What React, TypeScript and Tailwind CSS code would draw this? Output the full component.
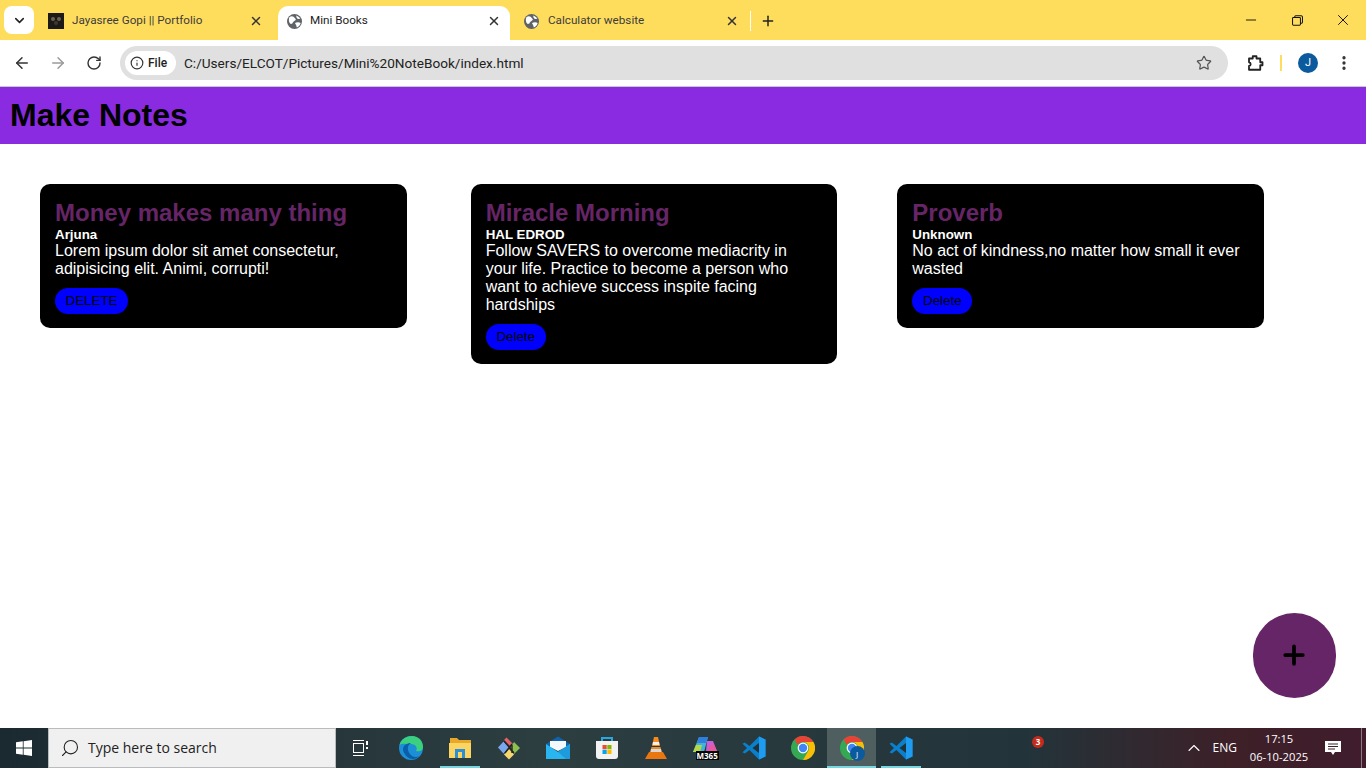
import { ArrowLeft, ArrowRight, ChevronDown, ChevronUp, Info, Minus, MoreVertical, Plus, RotateCw, Search, Star, X } from "lucide-react";

const notes = [
  { title: "Money makes many thing", author: "Arjuna", text: "Lorem ipsum dolor sit amet consectetur, adipisicing elit. Animi, corrupti!", button: "DELETE", cls: "", btn: "w-[73px]" },
  { title: "Miracle Morning", author: "HAL EDROD", text: "Follow SAVERS to overcome mediacrity in your life. Practice to become a person who want to achieve success inspite facing hardships", button: "Delete", cls: "ml-[64px]", btn: "w-[60px]" },
  { title: "Proverb", author: "Unknown", text: "No act of kindness,no matter how small it ever wasted", button: "Delete", cls: "ml-[60px]", btn: "w-[60px]" },
];

function Globe() {
  return (
    <svg viewBox="0 0 16 16" className="w-[15px] h-[15px] shrink-0">
      <circle cx="8" cy="8" r="8" fill="#5f6368" />
      <path d="M2.5 3.5C4 2 6 2 7 3L9.5 5.5C9 7 7.5 7.5 6.5 8.5 6 10 5 11 3.5 10.5 2 9 1.5 6 2.5 3.5Z" fill="#fff" />
      <path d="M10 1.6C12 2.4 13.4 3.6 14.2 5L11.5 5.2 10 3.5Z M8.5 9.5C10.5 8.5 13 8.5 14.6 9.5 14 12 12.5 13.5 10.5 14.4L9.8 12Z" fill="#fff" />
    </svg>
  );
}

function Favicon() {
  return (
    <svg viewBox="0 0 16 16" className="w-4 h-4 shrink-0">
      <rect width="16" height="16" fill="#1c1a18" />
      <circle cx="5" cy="6" r="2" fill="#6d6250" />
      <circle cx="11" cy="6" r="2" fill="#6d6250" />
      <circle cx="8" cy="10" r="2" fill="#3e3830" />
    </svg>
  );
}

function Chrome({ size = 24 }: { size?: number }) {
  return (
    <svg viewBox="0 0 24 24" width={size} height={size}>
      <circle cx="12" cy="12" r="12" fill="#34a853" />
      <path d="M12 0A12 12 0 0 1 22.4 6H12A6 6 0 0 0 6.8 9L3.6 3.4A12 12 0 0 1 12 0Z" fill="#ea4335" />
      <path d="M22.4 6A12 12 0 0 1 12 24L17.2 15A6 6 0 0 0 17.2 9 6 6 0 0 0 12 6Z" fill="#fbbc04" />
      <circle cx="12" cy="12" r="5.4" fill="#fff" />
      <circle cx="12" cy="12" r="4.2" fill="#4285f4" />
    </svg>
  );
}

function VsCode() {
  return (
    <svg viewBox="0 0 24 24" className="w-6 h-6">
      <path d="M17 .5 7.5 10 2.8 6.5 .5 7.8 5 12 .5 16.2 2.8 17.5 7.5 14 17 23.5 23.5 20.5V3.5Z" fill="#0a7fcb" />
      <path d="M17 .5 23.5 3.5V20.5L17 23.5Z" fill="#1f9cf0" />
      <path d="M17 7 10.5 12 17 17Z" fill="#1f3238" />
    </svg>
  );
}

function TaskIcon({ children, open, active }: { children?: React.ReactNode; open?: boolean; active?: boolean }) {
  return (
    <div className={`relative w-[49px] h-10 flex items-center justify-center ${active ? "bg-[#4f5f60]" : ""}`}>
      {children}
      {(open || active) && <span className={`absolute bottom-0 h-0.5 bg-[#76d5de] ${active ? "inset-x-0" : "left-[5px] w-10"}`} />}
    </div>
  );
}

export default function App() {
  return (
    <div className="relative h-screen overflow-hidden flex flex-col bg-white font-['Liberation_Sans',sans-serif]">
      {/* tab strip */}
      <div className="h-10 shrink-0 bg-[#ffdd5c] flex items-end font-['Roboto',sans-serif] text-[11.7px] text-[#3c3c3c]">
        <div className="w-[30px] h-[28px] mb-[6px] ml-1 rounded-lg bg-white flex items-center justify-center">
          <ChevronDown size={15} strokeWidth={2.5} color="#222" />
        </div>
        <div className="w-[244px] h-[34px] pb-1 pl-[14px] pr-[15px] flex items-center">
          <Favicon />
          <span className="ml-2 flex-1">Jayasree Gopi || Portfolio</span>
          <X size={14} strokeWidth={2.5} color="#333" />
        </div>
        <div className="w-[232px] h-[34px] pb-1 pl-[9px] pr-[9px] rounded-t-[10px] bg-white flex items-center">
          <Globe />
          <span className="ml-[8px] flex-1 text-[#222]">Mini Books</span>
          <X size={14} strokeWidth={2.5} color="#333" />
        </div>
        <div className="w-[241px] h-[34px] pb-1 pl-[14px] flex items-center">
          <Globe />
          <span className="ml-[9px] flex-1">Calculator website</span>
          <X size={14} strokeWidth={2.5} color="#333" />
          <div className="w-px h-5 bg-white ml-[11px]" />
        </div>
        <div className="h-[34px] pb-1 ml-[9px] flex items-center">
          <Plus size={16} strokeWidth={2.2} color="#222" />
        </div>
        <div className="flex-1" />
        <div className="h-10 flex items-center text-black">
          <div className="w-[46px] flex justify-center"><Minus size={16} strokeWidth={1.3} /></div>
          <div className="w-[46px] flex justify-center">
            <svg viewBox="0 0 12 12" className="w-[11px] h-[11px]" fill="none" stroke="#111" strokeWidth="1.1">
              <rect x="0.6" y="2.6" width="8.6" height="8.6" rx="1" />
              <path d="M3 2.5V1.8A1 1 0 0 1 4 .8H10A1.4 1.4 0 0 1 11.4 2V8A1 1 0 0 1 10.4 9H9.4" />
            </svg>
          </div>
          <div className="w-[46px] flex justify-center"><X size={18} strokeWidth={1.2} /></div>
        </div>
      </div>

      {/* toolbar */}
      <div className="h-[47px] shrink-0 bg-white rounded-t-lg border-b border-[#c9c9c9] flex items-center pl-[13px] pr-[13px]">
        <ArrowLeft size={18} strokeWidth={2} color="#333" />
        <ArrowRight size={18} strokeWidth={2} color="#9a9a9a" className="ml-[18px]" />
        <RotateCw size={16} strokeWidth={2.1} color="#333" className="ml-[19px]" />
        <div className="ml-[18px] w-[1108px] h-[34px] rounded-full bg-[#e0e0e0] flex items-center pl-[5px] pr-[16px] font-['Roboto',sans-serif]">
          <div className="w-[51px] h-6 rounded-full bg-white flex items-center pl-[5px] gap-[4px] text-xs font-medium text-[#222]">
            <Info size={14} strokeWidth={2} color="#333" />
            File
          </div>
          <span className="ml-2 pt-px text-[13.6px] text-[#222]">C:/Users/ELCOT/Pictures/Mini%20NoteBook/index.html</span>
          <div className="flex-1" />
          <Star size={16} strokeWidth={1.8} color="#555" />
        </div>
        <svg viewBox="0 0 24 24" className="w-[18px] h-[18px] ml-[18px] mr-px" fill="none" stroke="#222" strokeWidth="2.4" strokeLinejoin="round">
          <path d="M4 6H9V3H14V6H19V11H22V15H19V21H4V16C7 15.5 7 11.5 4 11Z" />
        </svg>
        <div className="w-0.5 h-4 bg-[#ffdd5c] ml-[15px]" />
        <div className="w-5 h-5 ml-[16px] rounded-full bg-[#0b5a9e] flex items-center justify-center text-[11px] text-white font-['Roboto',sans-serif]">J</div>
        <MoreVertical size={18} strokeWidth={2.4} color="#333" className="ml-[17px]" />
      </div>

      {/* page */}
      <header className="h-[57px] shrink-0 bg-[#8a2be2] pl-[10px] pb-[2px] flex items-center">
        <h1 className="text-[32px] font-bold text-black">Make Notes</h1>
      </header>
      <main className="flex-1 flex items-start pl-10 pt-10">
        {notes.map((n) => (
          <div key={n.title} className={`${n.cls} w-[366.67px] shrink-0 bg-black rounded-[10px] px-[15px] pt-[15px] pb-[14px]`}>
            <h2 className="text-2xl font-bold leading-[28px] text-[#662566]">{n.title}</h2>
            <h4 className="text-[13.33px] font-bold leading-[15px] text-white">{n.author}</h4>
            <p className="text-base leading-[18px] text-white">{n.text}</p>
            <button className={`${n.btn} h-[26px] mt-[10px] block rounded-[13px] bg-[#0000ff] text-[13.33px] text-black`}>{n.button}</button>
          </div>
        ))}
      </main>
      <button className="absolute right-[30px] bottom-[70px] w-[83px] h-[85px] pr-px pb-px rounded-full bg-[#662566] flex items-center justify-center text-black">
        <Plus size={30} strokeWidth={3} />
      </button>

      {/* taskbar */}
      <div className="relative h-10 shrink-0 flex items-center bg-[linear-gradient(90deg,#1b2a31_0%,#2d3e41_40%,#22343a_75%,#3d2028_90%,#401c2c_100%)] text-white font-['Open_Sans',sans-serif]">
        <div className="w-12 h-10 flex items-center justify-center">
          <svg viewBox="0 0 16 16" className="w-4 h-4" fill="#fff">
            <path d="M0 2.3 6.8 1.3V7.6H0ZM7.6 1.2 16 0V7.6H7.6ZM0 8.4H6.8V14.7L0 13.7ZM7.6 8.4H16V16L7.6 14.8Z" />
          </svg>
        </div>
        <div className="w-[288px] h-10 bg-[#f0f0f0] border border-[#b8bcbe] flex items-center pl-[11px] text-sm text-[#222]">
          <Search size={20} strokeWidth={1.3} color="#222" className="-scale-x-100" />
          <span className="ml-[8px]">Type here to search</span>
        </div>
        <div className="w-[50px] h-10 flex items-center justify-center">
          <svg viewBox="0 0 16 16" className="w-4 h-4" fill="none" stroke="#fff" strokeWidth="1">
            <path d="M0 .5H11M0 15.5H11" />
            <rect x=".5" y="3.5" width="10" height="9" />
            <path d="M14 1V5M14 7V9" strokeWidth="2" />
          </svg>
        </div>
        <TaskIcon>
          <svg viewBox="0 0 24 24" className="w-6 h-6">
            <circle cx="12" cy="12" r="12" fill="#1c8fd6" />
            <path d="M.5 9C2 3 8 0 13 0 20 0 24 5 24 11 24 15 20 16 17 15 19 12 17 8 12 8 7 8 3 7 .5 9Z" fill="#3bd07f" />
            <path d="M4 14C4 9 8 7 12 7 8 9 8 14 11 18 13 21 17 22 20 20 16 25 7 24 4 14Z" fill="#0b5ea8" />
          </svg>
        </TaskIcon>
        <TaskIcon open>
          <svg viewBox="0 0 24 24" className="w-6 h-6">
            <path d="M2 2H9L11 4H23V20H2Z" fill="#e8a92b" />
            <path d="M1 7H23V22H1Z" fill="#fcd462" />
            <path d="M7 13H17V22H14V16H10V22H7Z" fill="#2a8fd4" />
          </svg>
        </TaskIcon>
        <TaskIcon>
          <svg viewBox="0 0 24 24" className="w-6 h-6">
            <path d="M7 4 9.5 1.5 16.5 8.5 14 11Z" fill="#e2636a" />
            <path d="M6.5 5.5 12 11 6.5 17.5 1 11.5Z" fill="#7ba7ef" />
            <path d="M17 6 23 12 17 18 13 13Z" fill="#8cc152" />
            <path d="M12 13 17 18.5 12 23.5 7 18.5Z" fill="#f5d76e" />
            <path d="M7 5 17 17M15 8 8 17M15 9V17" stroke="#222" strokeWidth="1.4" fill="none" />
          </svg>
        </TaskIcon>
        <TaskIcon>
          <svg viewBox="0 0 24 24" className="w-6 h-6">
            <path d="M0 8 12 .5 24 8V12H0Z" fill="#0f62ad" />
            <path d="M4 5H20V11L12 15 4 11Z" fill="#f4f8fb" />
            <path d="M0 8 12 16 24 8V23H0Z" fill="#29b6f0" />
            <path d="M12 16 24 8V23H20Z" fill="#1e9bdc" />
          </svg>
        </TaskIcon>
        <TaskIcon>
          <svg viewBox="0 0 24 24" className="w-6 h-6">
            <path d="M7 6V2H17V6" fill="none" stroke="#29a8e0" strokeWidth="2" />
            <path d="M1 5H23V20A3 3 0 0 1 20 23H4A3 3 0 0 1 1 20Z" fill="#f2f2f2" />
            <rect x="7.5" y="9" width="4.2" height="4.2" fill="#e94f2e" />
            <rect x="12.3" y="9" width="4.2" height="4.2" fill="#7fba00" />
            <rect x="7.5" y="13.8" width="4.2" height="4.2" fill="#00a4ef" />
            <rect x="12.3" y="13.8" width="4.2" height="4.2" fill="#ffb900" />
          </svg>
        </TaskIcon>
        <TaskIcon>
          <svg viewBox="0 0 24 24" className="w-6 h-6">
            <path d="M10 1H14L16 10H8Z" fill="#f78a1e" />
            <path d="M9 6H15L15.5 9H8.5Z" fill="#f2f2f2" />
            <path d="M7.5 11H16.5L18 17H6Z" fill="#f78a1e" />
            <path d="M7 13H17L17.5 16H6.5Z" fill="#d8d8d8" />
            <path d="M5 16H19L23 23H1Z" fill="#e9760f" />
          </svg>
        </TaskIcon>
        <TaskIcon>
          <div className="relative w-6 h-6">
            <svg viewBox="0 0 24 24" className="w-6 h-6">
              <path d="M6 1H15L11 16H0Z" fill="#3fb4d8" />
              <path d="M6 1H15L13 7H4Z" fill="#2f7fe0" />
              <path d="M14 5H20L24 15H13Z" fill="#c85fd6" />
              <path d="M3 9 9 9 7 16H0Z" fill="#b5d84a" />
              <path d="M17 9 21 9 24 15H15Z" fill="#e857a0" />
            </svg>
            <span className="absolute left-[3px] top-[15px] bg-black text-white text-[8px] leading-[9px] font-bold px-px">M365</span>
          </div>
        </TaskIcon>
        <TaskIcon><VsCode /></TaskIcon>
        <TaskIcon><Chrome /></TaskIcon>
        <TaskIcon active>
          <div className="relative w-6 h-6">
            <Chrome />
            <span className="absolute left-[10px] top-[10px] w-[15px] h-[15px] rounded-full bg-[#0b5a9e] flex items-center justify-center text-[8px]">J</span>
          </div>
        </TaskIcon>
        <TaskIcon open><VsCode /></TaskIcon>
        <span className="absolute left-[1032px] top-[8px] w-3 h-3 rounded-full bg-[#c42b1c] flex items-center justify-center text-[8px] font-bold leading-none">3</span>
        <div className="flex-1" />
        <ChevronUp size={20} strokeWidth={1.3} />
        <span className="ml-[9px] text-xs">ENG</span>
        <div className="w-[72px] ml-[6px] text-[11.2px] text-center leading-[18px]">
          <div>17:15</div>
          <div>06-10-2025</div>
        </div>
        <svg viewBox="0 0 16 16" className="w-4 h-4 ml-[10px]" fill="#fff">
          <path d="M0 1H16V12H10L8 15 6 12H0Z" />
          <path d="M3 4H13M3 6.5H13M3 9H10" stroke="#3d2028" strokeWidth="1" />
        </svg>
        <div className="w-px h-10 ml-[20px] bg-[#8a7a80]" />
        <div className="w-1" />
      </div>
    </div>
  );
}
